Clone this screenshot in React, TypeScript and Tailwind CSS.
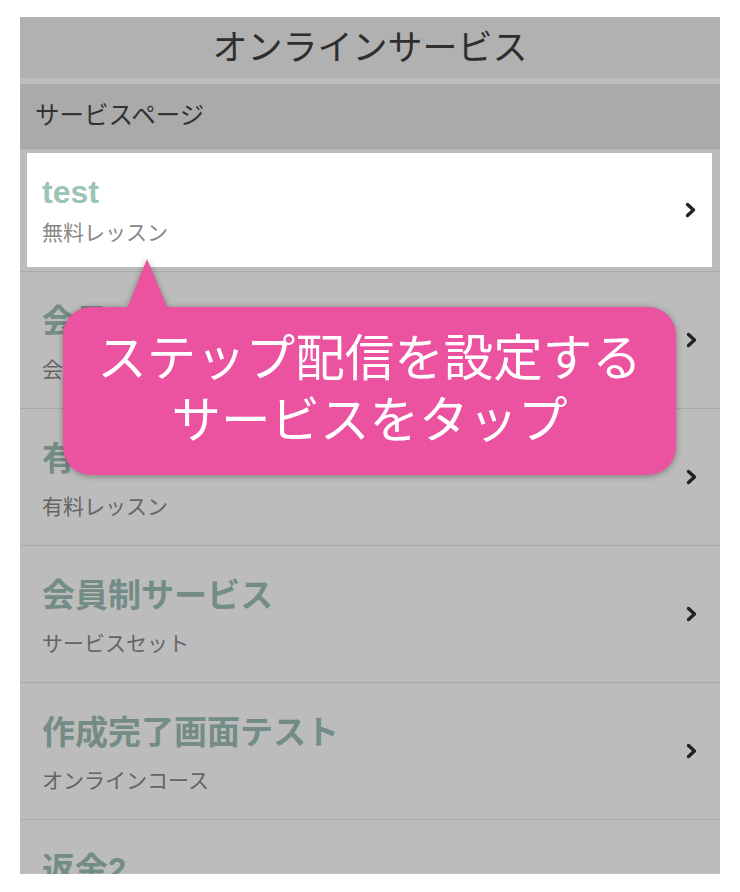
import React from "react";

interface Service {
  title: string;
  kind: string;
}

const services: Service[] = [
  { title: "会員サイト", kind: "会員サイト" },
  { title: "有料レッスン", kind: "有料レッスン" },
  { title: "会員制サービス", kind: "サービスセット" },
  { title: "作成完了画面テスト", kind: "オンラインコース" },
  { title: "返金2", kind: "有料レッスン" },
];

function Chevron() {
  return (
    <svg width="12" height="16" viewBox="0 0 12 16" className="shrink-0">
      <polyline
        points="2.5,2.5 8.5,8 2.5,13.5"
        fill="none"
        stroke="#222"
        strokeWidth="3.4"
        strokeLinecap="round"
        strokeLinejoin="round"
      />
    </svg>
  );
}

export default function App() {
  return (
    <div
      className="min-h-[892px] bg-white pt-[17px] px-[20px]"
      style={{ fontFamily: '"Liberation Sans", "Noto Sans CJK JP", sans-serif' }}
    >
      <div className="relative h-[857px] overflow-hidden bg-[#bcbcbc]">
        {/* header */}
        <div className="h-[61px] bg-[#b1b1b1] flex items-center justify-center">
          <h1 className="text-[35px] leading-none text-[#2e2e2e]">オンラインサービス</h1>
        </div>
        <div className="h-[6px] bg-[#bdbdbd]" />
        <div className="h-[65px] bg-[#aaaaaa] flex items-center px-[15px]">
          <span className="text-[24.5px] text-[#333]">サービスページ</span>
        </div>

        {/* highlighted row */}
        <div className="border-t border-[#b8b8b8] border-b border-b-[#aaaaaa] pt-[3px] pb-[4px] pr-[8px] pl-[7px]">
          <div className="h-[114px] bg-white flex items-center justify-between pl-[15px] pr-[15px]">
            <div className="flex flex-col gap-[7px] -mt-[1px]">
              <span className="text-[32px] leading-[40px] font-bold text-[#9cc3b7]">test</span>
              <span className="text-[21px] leading-[28px] text-[#888]">無料レッスン</span>
            </div>
            <Chevron />
          </div>
        </div>

        {/* other rows */}
        {services.map((s) => (
          <div
            key={s.title}
            className="h-[137px] border-b border-[#a9a9a9] flex items-center justify-between pl-[22px] pr-[22px]"
          >
            <div className="flex flex-col gap-[14px] pt-[5px]">
              <span className="text-[33px] leading-[40px] font-bold text-[#738c85]">{s.title}</span>
              <span className="text-[21px] leading-[28px] text-[#646464]">{s.kind}</span>
            </div>
            <Chevron />
          </div>
        ))}

        {/* callout */}
        <div className="absolute left-[43px] top-[290px] w-[613px] drop-shadow-[0_1px_3px_rgba(0,0,0,0.35)]">
          <div className="absolute left-[64px] -top-[48px] w-0 h-0 border-l-[20px] border-r-[21px] border-b-[50px] border-l-transparent border-r-transparent border-b-[#eb529f]" />
          <div className="h-[168px] rounded-[28px] bg-[#eb529f] flex flex-col items-center justify-center text-white text-[49.5px] leading-[62px] pb-[3px]">
            <span>ステップ配信を設定する</span>
            <span>サービスをタップ</span>
          </div>
        </div>
      </div>
    </div>
  );
}
